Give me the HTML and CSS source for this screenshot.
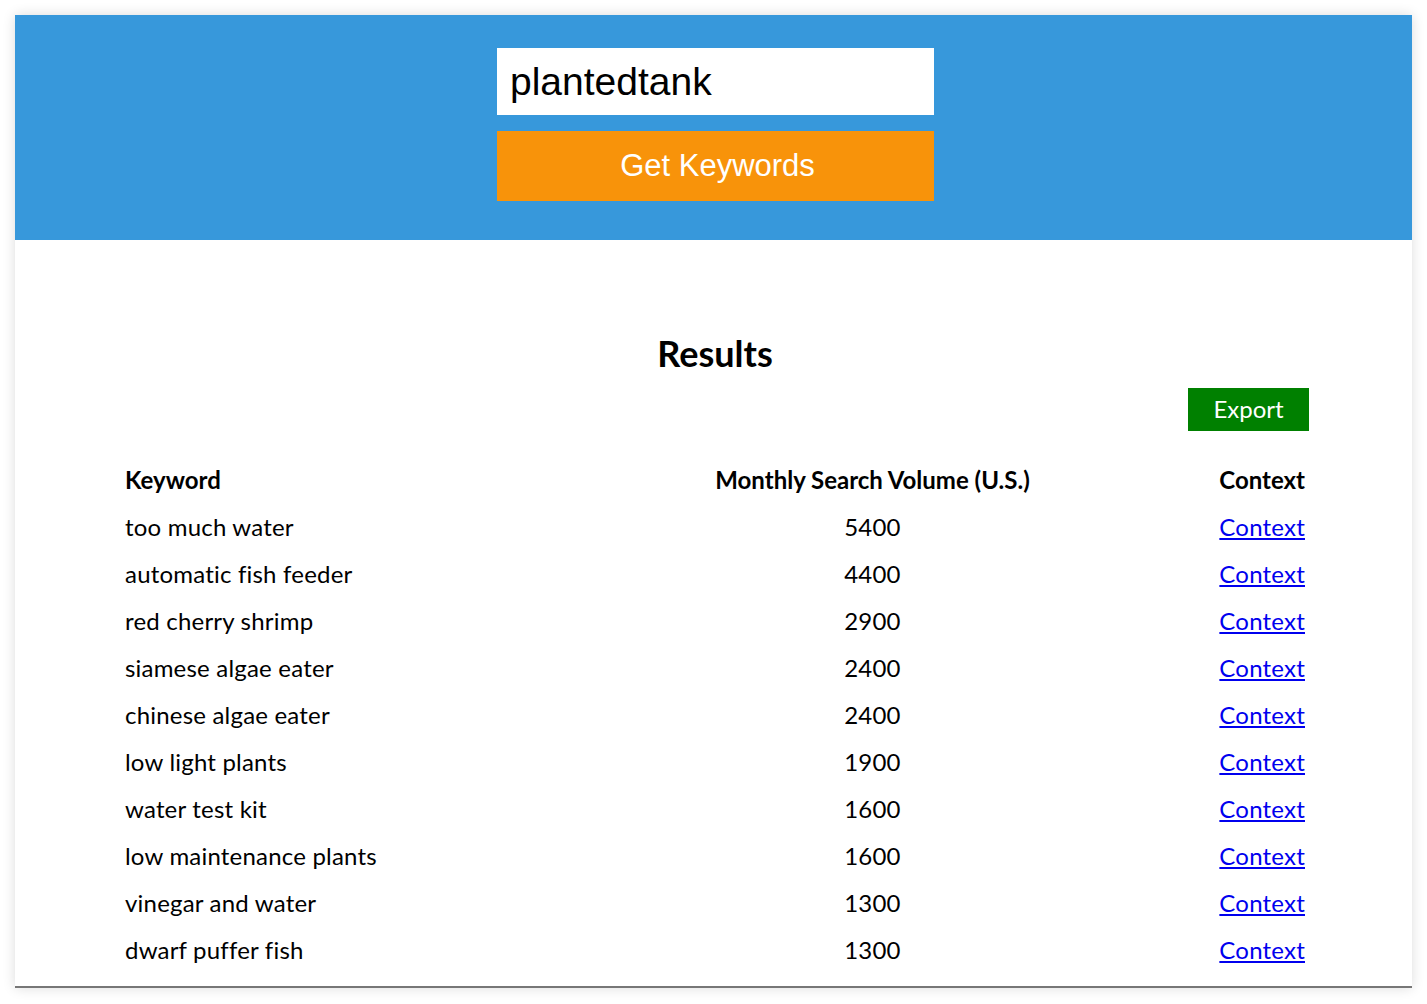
FILE: index.html
```html
<!DOCTYPE html>
<html lang="en">
<head>
<meta charset="utf-8">
<title>Keywords</title>
<link rel="stylesheet" href="styles.css">
</head>
<body>
<div class="card">
  <header class="hero">
    <form class="search">
      <input class="search-input" type="text" value="plantedtank">
      <button class="search-btn" type="button">Get Keywords</button>
    </form>
  </header>
  <main class="results">
    <h2 class="results-title">Results</h2>
    <div class="export-row"><button class="export-btn" type="button">Export</button></div>
    <div class="table">
      <div class="th col-kw">Keyword</div>
      <div class="th col-vol">Monthly Search Volume (U.S.)</div>
      <div class="th col-ctx">Context</div>

      <div class="col-kw">too much water</div><div class="col-vol">5400</div><div class="col-ctx"><a href="#">Context</a></div>
      <div class="col-kw">automatic fish feeder</div><div class="col-vol">4400</div><div class="col-ctx"><a href="#">Context</a></div>
      <div class="col-kw">red cherry shrimp</div><div class="col-vol">2900</div><div class="col-ctx"><a href="#">Context</a></div>
      <div class="col-kw">siamese algae eater</div><div class="col-vol">2400</div><div class="col-ctx"><a href="#">Context</a></div>
      <div class="col-kw">chinese algae eater</div><div class="col-vol">2400</div><div class="col-ctx"><a href="#">Context</a></div>
      <div class="col-kw">low light plants</div><div class="col-vol">1900</div><div class="col-ctx"><a href="#">Context</a></div>
      <div class="col-kw">water test kit</div><div class="col-vol">1600</div><div class="col-ctx"><a href="#">Context</a></div>
      <div class="col-kw">low maintenance plants</div><div class="col-vol">1600</div><div class="col-ctx"><a href="#">Context</a></div>
      <div class="col-kw">vinegar and water</div><div class="col-vol">1300</div><div class="col-ctx"><a href="#">Context</a></div>
      <div class="col-kw">dwarf puffer fish</div><div class="col-vol">1300</div><div class="col-ctx"><a href="#">Context</a></div>
    </div>
  </main>
</div>
</body>
</html>
```
FILE: styles.css
```css
* { box-sizing: border-box; }
html, body { margin: 0; padding: 0; }
body {
  background: #ffffff;
  padding: 15px;
  font-family: Lato, "Open Sans", sans-serif;
  color: #000;
}
.card {
  background: #fff;
  box-shadow: 0 0 12px rgba(0,0,0,0.14);
  border-bottom: 2px solid #777;
  height: 973px;
  overflow: hidden;
}
.hero {
  background: #3798db;
  height: 225px;
  display: flex;
  justify-content: center;
  padding-top: 33px;
}
.search {
  width: 437px;
  display: flex;
  flex-direction: column;
  gap: 16px;
  margin-left: 4px;
}
.search-input {
  display: block;
  width: 100%;
  height: 67px;
  border: none;
  margin: 0;
  padding: 0 13px;
  font-family: "Liberation Sans", Arial, sans-serif;
  font-size: 39px;
  color: #000;
  background: #fff;
  outline: none;
}
.search-btn {
  display: block;
  width: 100%;
  height: 70px;
  border: none;
  margin: 0;
  background: #f8930a;
  color: #fff;
  font-family: "Liberation Sans", Arial, sans-serif;
  font-size: 31px;
  padding: 0 0 0 4px;
  cursor: pointer;
}
.results {
  width: 1183px;
  padding-left: 3px;
  margin: 0 auto;
  padding-top: 91px;
}
.results-title {
  margin: 0;
  text-align: center;
  font-size: 36px;
  line-height: 44px;
  font-weight: 700;
}
.export-row {
  display: flex;
  justify-content: flex-end;
  margin-top: 13px;
  margin-right: -4px;
}
.export-btn {
  height: 43px;
  width: 121px;
  border: none;
  background: #008000;
  color: #fff;
  font-family: Lato, "Open Sans", sans-serif;
  font-size: 24px;
  padding: 0 0 3px;
}
.table {
  margin-top: 25px;
  display: grid;
  grid-template-columns: 590px 315px 1fr;
  grid-auto-rows: 47px;
  align-items: center;
  font-size: 24px;
  letter-spacing: 0.2px;
}
.th { font-weight: 700; letter-spacing: 0; }
.col-kw { text-align: left; }
.col-vol { text-align: center; }
.col-ctx { text-align: right; }
.table a { color: #0000ee; text-decoration: underline; }
```
